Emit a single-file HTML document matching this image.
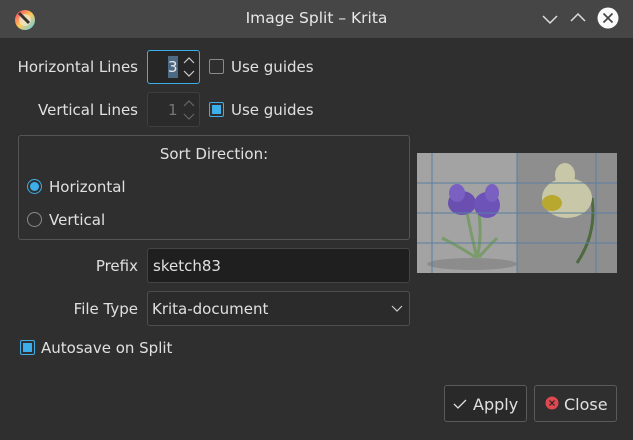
<!DOCTYPE html>
<html><head><style>
*{box-sizing:border-box;margin:0;padding:0}
body{width:633px;height:440px;background:#2f2f2f;font-family:"DejaVu Sans","Liberation Sans",sans-serif;font-size:15px;color:#e0e0e0;position:relative;overflow:hidden}
.a{position:absolute}
.title{left:0;top:0;width:633px;height:38px;background:#464646}
.lbl{text-align:right;white-space:nowrap}
.spin{border:1px solid #4a4a4a;border-radius:3px;background:#262626}
.cb{width:15px;height:15px;border:1px solid #8a8a8a;border-radius:2px}
.cbon{border-color:#3daee9}
.cbon::after{content:"";position:absolute;left:2px;top:2px;width:9px;height:9px;background:#3daee9}
.rb{width:15px;height:15px;border:1px solid #8a8a8a;border-radius:50%}
.btn{border:1px solid #5a5a5a;border-radius:3px;background:#292929;height:37px}
</style></head><body>
<div class="a title"></div>
<svg class="a" style="left:14px;top:9px" width="22" height="22" viewBox="0 0 22 22">
<defs><linearGradient id="g" x1="0" y1="0" x2="1" y2="1"><stop offset="0" stop-color="#f36"/><stop offset=".5" stop-color="#fc5"/><stop offset="1" stop-color="#5cf"/></linearGradient></defs>
<circle cx="11" cy="11" r="10" fill="url(#g)"/><circle cx="11" cy="11" r="6" fill="#eee" opacity=".6"/><path d="M5 4 L15 14" stroke="#333" stroke-width="3"/></svg>
<div class="a" style="left:0;width:633px;top:9px;text-align:center;font-size:15.5px;color:#e8e8e8">Image Split – Krita</div>
<svg class="a" style="left:540px;top:12px" width="20" height="14"><path d="M3 4 L10 11 L17 4" stroke="#ddd" stroke-width="1.5" fill="none"/></svg>
<svg class="a" style="left:568px;top:10px" width="20" height="14"><path d="M3 11 L10 4 L17 11" stroke="#ddd" stroke-width="1.5" fill="none"/></svg>
<svg class="a" style="left:597px;top:7px" width="22" height="22"><circle cx="11" cy="11" r="10.5" fill="#fafafa"/><path d="M6.5 6.5 L15.5 15.5 M15.5 6.5 L6.5 15.5" stroke="#444" stroke-width="1.7"/></svg>

<div class="a lbl" style="left:0;width:138px;top:58px">Horizontal Lines</div>
<div class="a spin" style="left:147px;top:50px;width:53px;height:34px;border-color:#3daee9"></div>
<div class="a" style="left:168px;top:56px;width:10px;height:22px;background:#4d6a85"></div>
<div class="a" style="left:168px;top:58px;color:#e8e8e8">3</div>
<svg class="a" style="left:182px;top:54px" width="14" height="26"><path d="M2 9 L7 4 L12 9 M2 17 L7 22 L12 17" stroke="#ccc" stroke-width="1.2" fill="none"/></svg>
<div class="a cb" style="left:209px;top:59px"></div>
<div class="a" style="left:231px;top:58px">Use guides</div>

<div class="a lbl" style="left:0;width:138px;top:101px">Vertical Lines</div>
<div class="a spin" style="left:147px;top:92px;width:53px;height:35px;background:#2b2b2b;border-color:#3e3e3e"></div>
<div class="a" style="left:168px;top:101px;color:#777">1</div>
<svg class="a" style="left:182px;top:97px" width="14" height="26"><path d="M2 9 L7 4 L12 9 M2 17 L7 22 L12 17" stroke="#666" stroke-width="1.2" fill="none"/></svg>
<div class="a cb cbon" style="left:209px;top:102px"></div>
<div class="a" style="left:231px;top:101px">Use guides</div>

<div class="a" style="left:18px;top:135px;width:392px;height:105px;border:1px solid #555;border-radius:3px"></div>
<div class="a" style="left:18px;width:392px;top:145px;text-align:center">Sort Direction:</div>
<div class="a rb" style="left:27px;top:179px;border-color:#3daee9"></div>
<div class="a" style="left:30px;top:182px;width:9px;height:9px;border-radius:50%;background:#3daee9"></div>
<div class="a" style="left:49px;top:178px">Horizontal</div>
<div class="a rb" style="left:27px;top:212px"></div>
<div class="a" style="left:49px;top:211px">Vertical</div>

<div class="a lbl" style="left:0;width:138px;top:257px">Prefix</div>
<div class="a" style="left:147px;top:248px;width:263px;height:35px;border:1px solid #444;border-radius:3px;background:#1f1f1f"></div>
<div class="a" style="left:153px;top:257px">sketch83</div>
<div class="a lbl" style="left:0;width:138px;top:300px">File Type</div>
<div class="a" style="left:147px;top:291px;width:263px;height:35px;border:1px solid #4e4e4e;border-radius:3px;background:#2b2b2b"></div>
<div class="a" style="left:152px;top:300px">Krita-document</div>
<svg class="a" style="left:391px;top:303px" width="12" height="10"><path d="M1 3 L6 8 L11 3" stroke="#ccc" stroke-width="1.2" fill="none"/></svg>

<div class="a cb cbon" style="left:20px;top:340px"></div>
<div class="a" style="left:41px;top:339px">Autosave on Split</div>

<svg class="a" style="left:417px;top:153px" width="200" height="120" viewBox="0 0 200 120">
<rect width="100" height="120" fill="#a3a3a3"/><rect x="100" width="100" height="120" fill="#8e8e8e"/>
<ellipse cx="55" cy="111" rx="45" ry="6" fill="#8c8c8c"/>
<path d="M50 60 Q55 85 60 105 M62 60 Q65 85 60 105 M25 85 Q45 95 58 104 M80 85 Q70 95 62 104" stroke="#7a9a6a" stroke-width="3" fill="none"/>
<ellipse cx="45" cy="50" rx="14" ry="12" fill="#6a4fb0"/><ellipse cx="70" cy="52" rx="13" ry="13" fill="#6d52b8"/>
<ellipse cx="40" cy="40" rx="8" ry="9" fill="#7a60c0"/><ellipse cx="75" cy="40" rx="7" ry="9" fill="#7a60c0"/>
<path d="M175 45 Q180 80 160 110" stroke="#4e6a3e" stroke-width="3" fill="none"/>
<ellipse cx="150" cy="45" rx="25" ry="20" fill="#c8c8a8"/><ellipse cx="148" cy="22" rx="10" ry="12" fill="#c8c8a8"/>
<ellipse cx="135" cy="50" rx="10" ry="8" fill="#b8a830"/>
<path d="M15 0V120M100 0V120M179 0V120M0 30H200M0 60H200M0 90H200" stroke="#5a7fa0" stroke-width="1"/>
</svg>

<div class="a btn" style="left:444px;top:385px;width:83px"></div>
<svg class="a" style="left:453px;top:398px" width="14" height="12"><path d="M1 6 L5 10 L13 2" stroke="#ddd" stroke-width="1.3" fill="none"/></svg>
<div class="a" style="left:473px;top:395px;font-size:16px">Apply</div>
<div class="a btn" style="left:534px;top:385px;width:83px;background:#2f2f2f"></div>
<svg class="a" style="left:545px;top:396px" width="14" height="14"><circle cx="7" cy="7" r="6.5" fill="#e04850"/><path d="M4.5 4.5L9.5 9.5M9.5 4.5L4.5 9.5" stroke="#222" stroke-width="1.2"/></svg>
<div class="a" style="left:564px;top:395px;font-size:16px">Close</div>
</body></html>
